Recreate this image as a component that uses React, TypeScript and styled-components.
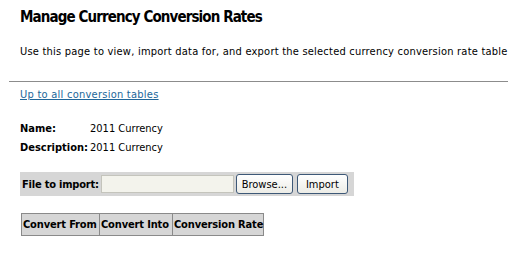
import React from "react";
import styled, { createGlobalStyle } from "styled-components";

const Global = createGlobalStyle`
  html, body { margin: 0; padding: 0; background: #ffffff; }
  body { font-family: Tahoma, "DejaVu Sans Condensed", "DejaVu Sans", sans-serif; color: #000; }
`;

const Page = styled.div`
  width: 514px;
  height: 260px;
  overflow: hidden;
  display: flex;
  flex-direction: column;
`;

const Header = styled.div`
  padding: 7px 0 0 20px;
  display: flex;
  flex-direction: column;
`;

const Title = styled.h1`
  margin: 0;
  font-size: 15px;
  font-weight: bold;
  line-height: 20px;
  letter-spacing: -0.9px;
`;

const Intro = styled.p`
  margin: 18px 0 0 0;
  font-size: 11px;
  line-height: 14px;
  letter-spacing: 0.22px;
  white-space: nowrap;
`;

const Rule = styled.hr`
  margin: 22px 6px 0 9px;
  border: 0;
  border-top: 1px solid #8c8c8c;
  height: 0;
`;

const Body = styled.div`
  padding: 6px 0 0 20px;
  display: flex;
  flex-direction: column;
  align-items: flex-start;
  font-size: 11px;
`;

const UpLink = styled.a`
  font-size: 11px;
  line-height: 14px;
  letter-spacing: 0.25px;
  color: #22679a;
  text-decoration: underline;
`;

const Props = styled.div`
  margin-top: 20px;
  display: grid;
  grid-template-columns: 70px auto;
  row-gap: 5px;
  font-size: 11px;
  line-height: 14px;
`;

const PropLabel = styled.span`
  font-weight: bold;
`;

const ImportBar = styled.div`
  margin-top: 17px;
  width: 334px;
  height: 24px;
  background: #d6d6d6;
  display: flex;
  align-items: center;
  padding: 0 2px;
  box-sizing: border-box;
  font-size: 11px;
`;

const BarLabel = styled.span`
  font-weight: bold;
  white-space: nowrap;
  flex-shrink: 0;
  margin-right: 2px;
  letter-spacing: -0.2px;
`;

const FileBox = styled.div`
  width: 133px;
  flex-shrink: 0;
  height: 18px;
  background: #f3f3ec;
  border: 1px solid #c4c4bc;
  box-sizing: border-box;
`;

const Button = styled.button<{ $w: number; $gap: number }>`
  width: ${(p) => p.$w}px;
  flex-shrink: 0;
  height: 20px;
  margin-left: ${(p) => p.$gap}px;
  font-family: inherit;
  font-size: 11px;
  padding: 0;
  background: linear-gradient(#ffffff, #ecece6);
  border: 1px solid #3d5877;
  border-radius: 3px;
  color: #000;
`;

const Table = styled.table`
  margin-top: 17px;
  margin-left: 1px;
  border-collapse: collapse;
  background: #d6d6d6;
  font-size: 11px;
`;

const Th = styled.th<{ $w: number }>`
  width: ${(p) => p.$w}px;
  box-sizing: border-box;
  border: 1px solid #8a8a8a;
  font-weight: bold;
  text-align: left;
  padding: 4px 0 3px 1px;
  line-height: 14px;
  white-space: nowrap;
  letter-spacing: -0.15px;
`;

export default function App() {
  return (
    <Page>
      <Global />
      <Header>
        <Title>Manage Currency Conversion Rates</Title>
        <Intro>
          Use this page to view, import data for, and export the selected currency conversion rate table
        </Intro>
      </Header>
      <Rule />
      <Body>
        <UpLink href="#">Up to all conversion tables</UpLink>
        <Props>
          <PropLabel>Name:</PropLabel>
          <span>2011 Currency</span>
          <PropLabel>Description:</PropLabel>
          <span>2011 Currency</span>
        </Props>
        <ImportBar>
          <BarLabel>File to import:</BarLabel>
          <FileBox />
          <Button $w={57} $gap={2}>Browse...</Button>
          <Button $w={51} $gap={4}>Import</Button>
        </ImportBar>
        <Table>
          <thead>
            <tr>
              <Th $w={78}>Convert From</Th>
              <Th $w={73}>Convert Into</Th>
              <Th $w={86}>Conversion Rate</Th>
            </tr>
          </thead>
        </Table>
      </Body>
    </Page>
  );
}
